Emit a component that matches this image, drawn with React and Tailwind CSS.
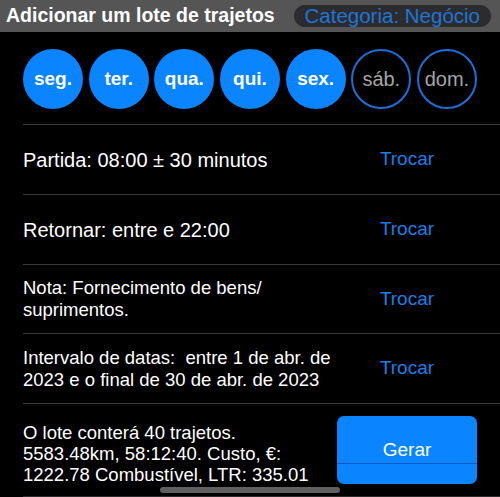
import React from 'react';

const days = [
  { label: 'seg.', on: true },
  { label: 'ter.', on: true },
  { label: 'qua.', on: true },
  { label: 'qui.', on: true },
  { label: 'sex.', on: true },
  { label: 'sáb.', on: false },
  { label: 'dom.', on: false },
];

const Row = ({ children, big, height = 'h-[70px]' }) => (
  <div className={`flex items-center ${height} border-b border-[#38383a] pr-[23px]`}>
    <div
      className={`flex-1 whitespace-nowrap text-white ${
        big ? 'text-[20px] leading-[24px]' : 'text-[18.5px] leading-[22px]'
      }`}
    >
      {children}
    </div>
    <div className="w-[140px] text-center text-[19px] text-[#1a7ee8]">Trocar</div>
  </div>
);

const App = () => {
  return (
    <div
      className="relative w-[500px] h-[497px] bg-black overflow-hidden"
      style={{ fontFamily: '"Liberation Sans", Arial, sans-serif' }}
    >
      <div className="flex items-center justify-between h-[32px] bg-[#555555] pl-[6px] pr-[9px]">
        <h1 className="text-[19.5px] font-bold text-white whitespace-nowrap">
          Adicionar um lote de trajetos
        </h1>
        <div className="flex items-center h-[22px] px-[11px] rounded-full bg-[#2c2c2e] text-[20.5px] leading-none text-[#1f74d6] whitespace-nowrap">
          Categoria: Negócio
        </div>
      </div>

      <div className="flex justify-between px-[23px] pt-[17px] pb-[15px]">
        {days.map((d) => (
          <div
            key={d.label}
            className={
              d.on
                ? 'flex items-center justify-center w-[60px] h-[60px] rounded-full bg-[#0a84ff] text-[19px] font-bold text-white'
                : 'flex items-center justify-center w-[60px] h-[60px] rounded-full border-2 border-[#1c6fd8] text-[20px] text-[#a5a5a5]'
            }
          >
            {d.label}
          </div>
        ))}
      </div>

      <div className="ml-[23px] border-t border-[#38383a]">
        <Row big>Partida: 08:00 ± 30 minutos</Row>
        <Row big>Retornar: entre e 22:00</Row>
        <Row height="h-[69px]">
          Nota: Fornecimento de bens/
          <br />
          suprimentos.
        </Row>
        <Row>
          Intervalo de datas:&nbsp; entre 1 de abr. de
          <br />
          2023 e o final de 30 de abr. de 2023
        </Row>
        <div className="flex items-center h-[93px] border-b border-[#2c2c2e] pr-[23px]">
          <div className="flex-1 mt-[6px] whitespace-nowrap text-[18.5px] leading-[21px] text-white">
            O lote conterá 40 trajetos.
            <br />
            5583.48km, 58:12:40. Custo, €:
            <br />
            1222.78 Combustível, LTR: 335.01
          </div>
          <button className="relative w-[140px] h-[68px] rounded-[7px] bg-[#0a84ff] text-[19px] text-white">
            Gerar
            <span className="absolute left-0 right-0 top-[47px] h-px bg-[#0a5dc0]" />
          </button>
        </div>
      </div>

      <div className="absolute left-[160px] bottom-[4px] w-[180px] h-[6px] rounded-full bg-[#5f5f5f]" />
    </div>
  );
};

export default App;
